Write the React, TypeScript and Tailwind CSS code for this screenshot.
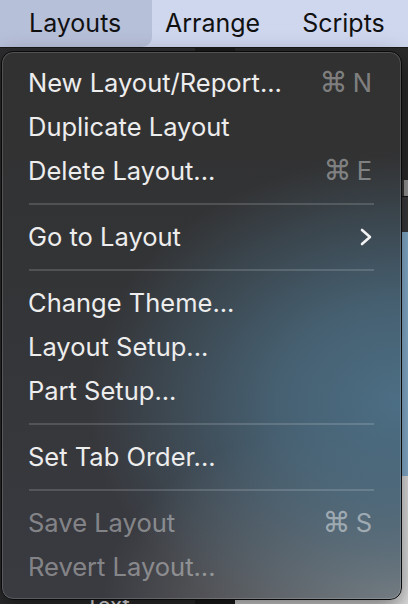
import React from "react";

type Item = { label: string; shortcut?: string; submenu?: boolean; disabled?: boolean };

const groups: Item[][] = [
  [
    { label: "New Layout/Report...", shortcut: "N" },
    { label: "Duplicate Layout" },
    { label: "Delete Layout...", shortcut: "E" },
  ],
  [{ label: "Go to Layout", submenu: true }],
  [{ label: "Change Theme..." }, { label: "Layout Setup..." }, { label: "Part Setup..." }],
  [{ label: "Set Tab Order..." }],
  [
    { label: "Save Layout", shortcut: "S", disabled: true },
    { label: "Revert Layout...", disabled: true },
  ],
];

function Row({ item }: { item: Item }) {
  return (
    <div className="h-[44px] flex items-center justify-between pl-[26px] pr-[29px]">
      <span className={item.disabled ? "text-white/40" : "text-[#ededed]"}>{item.label}</span>
      {item.shortcut && (
        <span className={`flex items-center gap-[5px] ${item.disabled ? "text-white/45" : "text-white/40"}`}>
          <span className="text-[28px] leading-none [font-family:'DejaVu_Sans',sans-serif]">⌘</span>
          <span>{item.shortcut}</span>
        </span>
      )}
      {item.submenu && (
        <svg width="14" height="18" viewBox="0 0 14 18" className="mr-[-1px]">
          <polyline points="3,2 11,9 3,16" fill="none" stroke="#f2f2f2" strokeWidth="2.6" strokeLinecap="round" strokeLinejoin="round" />
        </svg>
      )}
    </div>
  );
}

export default function App() {
  return (
    <div className="relative w-[408px] h-[604px] overflow-hidden bg-[#2a2a2a] [font-family:Inter,'Noto_Sans',sans-serif]">
      {/* Menu bar */}
      <div className="h-[48px] bg-[#cfd7ef] flex items-stretch text-[25px] text-[#111] border-b border-[#1a1a1a]">
        <div className="w-[152px] bg-[#b7c0d9] rounded-br-[10px] flex items-center pl-[29px]">Layouts</div>
        <div className="flex items-center pl-[13px]">Arrange</div>
        <div className="flex items-center pl-[42px]">Scripts</div>
      </div>

      {/* Background app content */}
      <div className="flex h-[556px]">
        <div className="w-[195px] bg-[#2d2d2f] flex flex-col justify-end items-center">
          <span className="text-white text-[22px] leading-none translate-y-[12px] mr-[-20px]">Text</span>
        </div>
        <div className="w-[40px] bg-[#1c1c1c]"></div>
        <div className="flex-1 flex flex-col">
          <div className="h-[132px] bg-[#2a2a2a]"></div>
          <div className="h-[16px] bg-[#3a3a3a] flex justify-end">
            <div className="w-[4px] bg-[#9a9a9a]"></div>
          </div>
          <div className="h-[36px] bg-[#3b3b3d] border-t border-[#111]"></div>
          <div className="h-[244px] bg-[#8cb6d6]"></div>
          <div className="flex-1 bg-[#e6e6e6]"></div>
        </div>
      </div>

      {/* Dropdown menu */}
      <div className="absolute left-[1px] top-[51px] w-[401px] h-[549px] rounded-[12px] border border-[#0a0a0a] overflow-hidden shadow-[0_8px_24px_rgba(0,0,0,0.5)] bg-[radial-gradient(ellipse_78%_45%_at_100%_64%,rgba(76,110,132,1)_0%,rgba(76,110,132,0.75)_40%,rgba(76,110,132,0)_100%),radial-gradient(ellipse_75%_34%_at_100%_100%,rgba(128,128,128,1),rgba(128,128,128,0)_100%),linear-gradient(180deg,#313131_0%,#333436_40%,#3a3b41_100%)]">
        <div className="absolute inset-0 rounded-[11px] shadow-[inset_0_0_0_1px_rgba(255,255,255,0.16)] pointer-events-none"></div>
        <div className="pt-[9px] text-[25.5px] leading-none">
          {groups.map((g, gi) => (
            <div key={gi}>
              {gi > 0 && (
                <div className="h-[22px] flex items-center pl-[27px] pr-[27px]">
                  <div className="h-[2px] w-full bg-white/15"></div>
                </div>
              )}
              {g.map((it) => (
                <Row key={it.label} item={it} />
              ))}
            </div>
          ))}
        </div>
      </div>
    </div>
  );
}
